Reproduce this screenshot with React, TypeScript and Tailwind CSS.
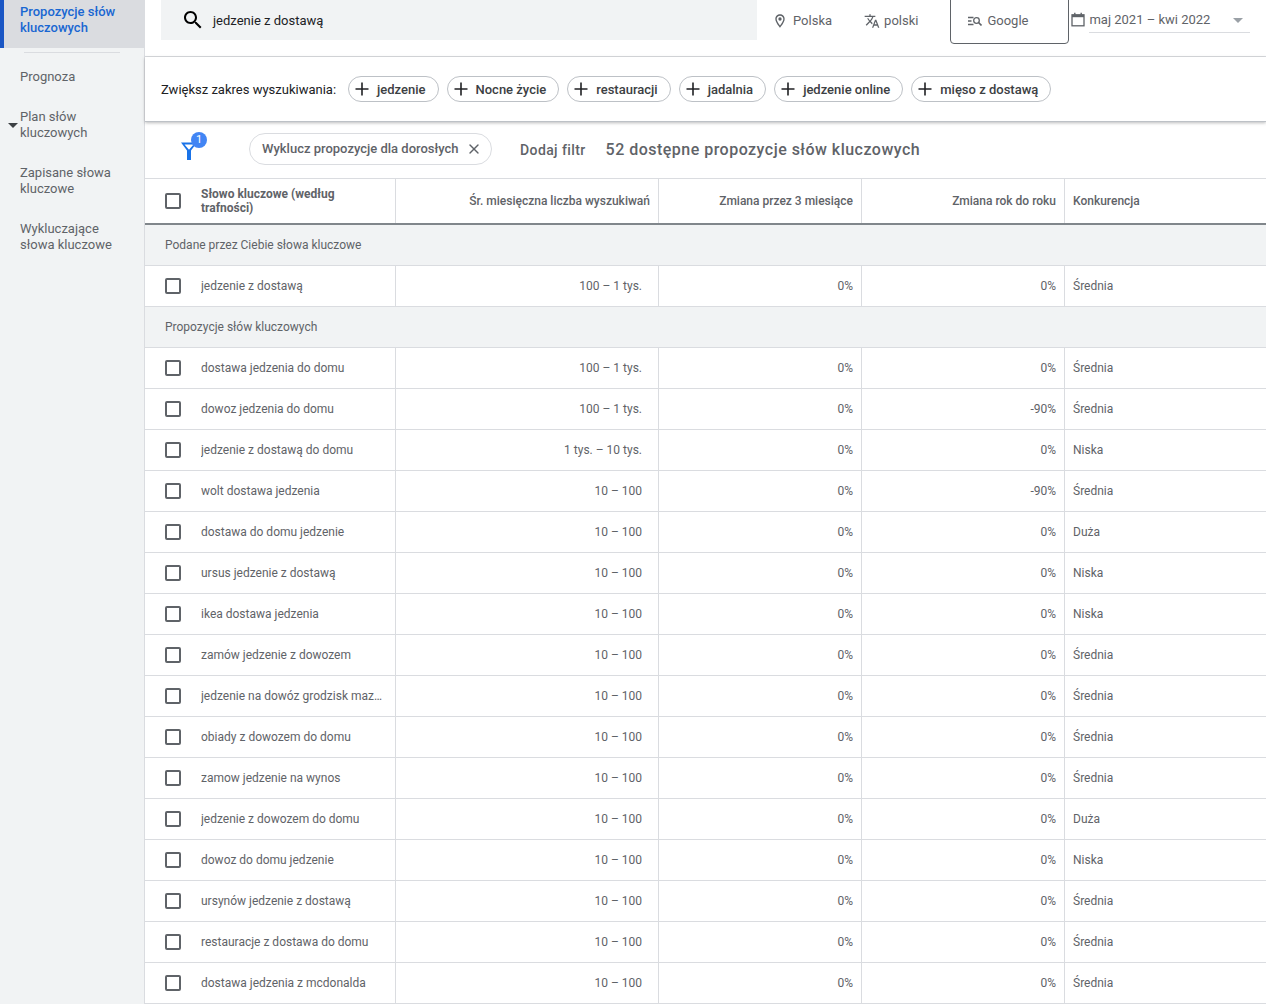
import { X } from 'lucide-react';
import type { ReactNode } from 'react';

type KeywordRow = { name: string; volume: string; yoy: string; competition: string };

const yourKeywords: KeywordRow[] = [{ name: 'jedzenie z dostawą', volume: '100 – 1 tys.', yoy: '0%', competition: 'Średnia' }];

const ideas: KeywordRow[] = [
  { name: 'dostawa jedzenia do domu', volume: '100 – 1 tys.', yoy: '0%', competition: 'Średnia' },
  { name: 'dowoz jedzenia do domu', volume: '100 – 1 tys.', yoy: '-90%', competition: 'Średnia' },
  { name: 'jedzenie z dostawą do domu', volume: '1 tys. – 10 tys.', yoy: '0%', competition: 'Niska' },
  { name: 'wolt dostawa jedzenia', volume: '10 – 100', yoy: '-90%', competition: 'Średnia' },
  { name: 'dostawa do domu jedzenie', volume: '10 – 100', yoy: '0%', competition: 'Duża' },
  { name: 'ursus jedzenie z dostawą', volume: '10 – 100', yoy: '0%', competition: 'Niska' },
  { name: 'ikea dostawa jedzenia', volume: '10 – 100', yoy: '0%', competition: 'Niska' },
  { name: 'zamów jedzenie z dowozem', volume: '10 – 100', yoy: '0%', competition: 'Średnia' },
  { name: 'jedzenie na dowóz grodzisk mazowiecki', volume: '10 – 100', yoy: '0%', competition: 'Średnia' },
  { name: 'obiady z dowozem do domu', volume: '10 – 100', yoy: '0%', competition: 'Średnia' },
  { name: 'zamow jedzenie na wynos', volume: '10 – 100', yoy: '0%', competition: 'Średnia' },
  { name: 'jedzenie z dowozem do domu', volume: '10 – 100', yoy: '0%', competition: 'Duża' },
  { name: 'dowoz do domu jedzenie', volume: '10 – 100', yoy: '0%', competition: 'Niska' },
  { name: 'ursynów jedzenie z dostawą', volume: '10 – 100', yoy: '0%', competition: 'Średnia' },
  { name: 'restauracje z dostawa do domu', volume: '10 – 100', yoy: '0%', competition: 'Średnia' },
  { name: 'dostawa jedzenia z mcdonalda', volume: '10 – 100', yoy: '0%', competition: 'Średnia' },
];

const chips = ['jedzenie', 'Nocne życie', 'restauracji', 'jadalnia', 'jedzenie online', 'mięso z dostawą'];

function Checkbox() {
  return <span className="block h-4 w-4 shrink-0 rounded-[2px] border-2 border-[#5f6368]" />;
}

function PlusIcon() {
  return (
    <svg width="14" height="14" viewBox="0 0 14 14" className="shrink-0">
      <path d="M7 0.5v13M0.5 7h13" stroke="#202124" strokeWidth="1.6" />
    </svg>
  );
}

function SideItem({ children, className = '' }: { children: ReactNode; className?: string }) {
  return <div className={`px-5 text-[13px] leading-4 text-[#5f6368] ${className}`}>{children}</div>;
}

function Row({ row }: { row: KeywordRow }) {
  return (
    <div className="grid h-[41px] grid-cols-[251px_263px_203px_203px_1fr] border-b border-[#dadce0] text-[12px] text-[#5f6368]">
      <div className="flex items-center border-r border-[#dadce0] pl-5">
        <Checkbox />
        <span className="ml-5 w-[181px] truncate">{row.name}</span>
      </div>
      <div className="flex items-center justify-end border-r border-[#dadce0] pr-4">{row.volume}</div>
      <div className="flex items-center justify-end border-r border-[#dadce0] pr-2">0%</div>
      <div className="flex items-center justify-end border-r border-[#dadce0] pr-2">{row.yoy}</div>
      <div className="flex items-center pl-2">{row.competition}</div>
    </div>
  );
}

function GroupRow({ label }: { label: string }) {
  return (
    <div className="flex h-[41px] items-center border-b border-[#dadce0] bg-[#f1f3f4] pl-5 text-[12px] text-[#5f6368]">{label}</div>
  );
}

export default function App() {
  return (
    <div className="flex h-[1004px] w-[1266px] overflow-hidden bg-white font-['Roboto',sans-serif]">
      <aside className="w-[145px] shrink-0 border-r border-[#dadce0] bg-[#f1f3f4]">
        <div className="h-12 border-l-4 border-[#1a56c4] bg-[#dadce0] pl-4 pt-[4px] text-[13px] font-medium leading-4 text-[#1967d2]">
          Propozycje słów
          <br />
          kluczowych
        </div>
        <div className="mx-6 mt-1 h-px bg-[#dadce0]" />
        <SideItem className="mt-4">Prognoza</SideItem>
        <div className="relative mt-[24px]">
          <span className="absolute left-2 top-[14px] h-0 w-0 border-x-[5px] border-t-[5px] border-x-transparent border-t-[#3c4043]" />
          <SideItem>
            Plan słów
            <br />
            kluczowych
          </SideItem>
        </div>
        <SideItem className="mt-6">
          Zapisane słowa
          <br />
          kluczowe
        </SideItem>
        <SideItem className="mt-6">
          Wykluczające
          <br />
          słowa kluczowe
        </SideItem>
      </aside>

      <main className="min-w-0 flex-1">
        <div className="flex h-[57px] border-b border-[#dadce0] text-[13px] text-[#5f6368]">
          <div className="ml-4 flex h-10 w-[596px] items-center bg-[#f1f3f4] pl-[20px] text-[#202124]">
            <svg width="24" height="24" viewBox="0 0 24 24" fill="#000" className="shrink-0">
              <path d="M15.5 14h-.79l-.28-.27C15.41 12.59 16 11.11 16 9.5 16 5.910 13.090 3 9.500 3S3 5.910 3 9.500 5.910 16 9.500 16c1.610 0 3.090-.59 4.230-1.570l.27.28v.79l5 4.990L20.490 19l-4.990-5zm-6 0C7.010 14 5 11.990 5 9.500S7.010 5 9.500 5 14 7.010 14 9.500 11.990 14 9.500 14z" />
            </svg>
            <span className="ml-[8px] mt-px">jedzenie z dostawą</span>
          </div>
          <div className="ml-[15px] flex h-10 items-center gap-[5px] pt-px">
            <svg width="16" height="16" viewBox="0 0 24 24" fill="#5f6368">
              <path d="M12 2C8.130 2 5 5.130 5 9c0 5.250 7 13 7 13s7-7.750 7-13c0-3.870-3.130-7-7-7zM7 9c0-2.760 2.240-5 5-5s5 2.240 5 5c0 2.880-2.880 7.190-5 9.880C9.920 16.210 7 11.850 7 9z" />
              <circle cx="12" cy="9" r="2.500" />
            </svg>
            <span>Polska</span>
          </div>
          <div className="ml-8 flex h-10 items-center gap-[4px] pt-px">
            <svg width="16" height="16" viewBox="0 0 24 24" fill="#5f6368">
              <path d="M12.870 15.070l-2.540-2.510.03-.03c1.740-1.940 2.980-4.170 3.710-6.530H17V4h-7V2H8v2H1v1.990h11.170C11.500 7.920 10.440 9.750 9 11.350 8.070 10.320 7.300 9.190 6.690 8h-2c.73 1.630 1.730 3.170 2.980 4.560l-5.090 5.020L4 19l5-5 3.110 3.110.76-2.040zM18.500 10h-2L12 22h2l1.120-3h4.750L21 22h2l-4.500-12zm-2.620 7l1.620-4.330L19.120 17h-3.240z" />
            </svg>
            <span>polski</span>
          </div>
          <div className="-mt-px ml-8 flex h-[45px] w-[119px] items-center gap-[5px] rounded-b-[4px] border border-[#5f6368] pb-[2px] pl-[17px]">
            <svg width="14" height="10" viewBox="0 0 14 10" fill="none" stroke="#5f6368" strokeWidth="1.300">
              <path d="M0 1.500h5.500M0 5h3.500M0 8.500h5.500" />
              <circle cx="8.500" cy="4.500" r="2.800" />
              <path d="M10.500 6.500l3 3" strokeWidth="1.600" />
            </svg>
            <span>Google</span>
          </div>
          <div className="ml-[2px] flex h-10 items-start pt-[12px]">
            <svg width="14" height="15" viewBox="0 0 14 15" fill="none" stroke="#5f6368">
              <rect x="1" y="2.800" width="12" height="11" strokeWidth="1.300" />
              <path d="M1 4h12" strokeWidth="2.400" />
              <path d="M3.800 0.800v2M10.200 0.800v2" strokeWidth="1.400" />
            </svg>
            <div className="ml-[4px] flex h-[21px] w-[161px] items-start justify-between border-b border-[#dadce0] pr-[7px] leading-[15px]">
              <span>maj 2021 – kwi 2022</span>
              <span className="mt-[6px] h-0 w-0 border-x-[5px] border-t-[5px] border-x-transparent border-t-[#9aa0a6]" />
            </div>
          </div>
        </div>

        <div className="relative z-10 flex h-[65px] items-center border-b border-[#bdc1c6] pl-4 shadow-[0_1px_3px_rgba(60,64,67,0.35)]">
          <span className="mt-px text-[13px] text-[#202124]">Zwiększ zakres wyszukiwania:</span>
          <div className="ml-3 flex gap-2">
            {chips.map((chip) => (
              <div key={chip} className="flex h-[26px] items-center gap-[8px] rounded-full border border-[#bdc1c6] pl-[6px] pr-3 text-[13px] font-medium text-[#3c4043]">
                <PlusIcon />
                <span className="mt-px">{chip}</span>
              </div>
            ))}
          </div>
        </div>

        <div className="flex h-[57px] items-center border-b border-[#dadce0]">
          <div className="relative ml-9 h-5 w-5">
            <svg width="16" height="18" viewBox="0 0 16 18" className="absolute left-0 top-[2px]">
              <path d="M0 0.500h16L10 8.500V18H6V8.500Z M3.500 2.500L8 7.800 12.500 2.500Z" fill="#1a73e8" fillRule="evenodd" />
            </svg>
            <span className="absolute left-[10px] -top-[8px] flex h-4 w-4 items-center justify-center rounded-full bg-[#4285f4] text-[11px] text-white">1</span>
          </div>
          <div className="mb-0.5 ml-[48px] flex h-8 w-[243px] items-center justify-between rounded-full border border-[#dadce0] pl-3 pr-[9px] text-[13px] font-medium text-[#5f6368]">
            <span>Wyklucz propozycje dla dorosłych</span>
            <X size={16} strokeWidth={2} color="#5f6368" />
          </div>
          <span className="ml-7 text-[14px] font-medium tracking-[0.4px] text-[#5f6368]">Dodaj filtr</span>
          <span className="ml-5 text-[16px] font-medium tracking-[0.48px] text-[#5f6368]">52 dostępne propozycje słów kluczowych</span>
        </div>

        <div className="grid h-[46px] grid-cols-[251px_263px_203px_203px_1fr] border-b-2 border-[#80868b] text-[12px] font-medium text-[#5f6368]">
          <div className="flex items-center border-r border-[#dadce0] pl-5">
            <Checkbox />
            <span className="ml-5 w-[160px] font-bold leading-[14px]">Słowo kluczowe (według trafności)</span>
          </div>
          <div className="flex items-center justify-end border-r border-[#dadce0] pr-2">Śr. miesięczna liczba wyszukiwań</div>
          <div className="flex items-center justify-end border-r border-[#dadce0] pr-2">Zmiana przez 3 miesiące</div>
          <div className="flex items-center justify-end border-r border-[#dadce0] pr-2">Zmiana rok do roku</div>
          <div className="flex items-center pl-2">Konkurencja</div>
        </div>

        <GroupRow label="Podane przez Ciebie słowa kluczowe" />
        {yourKeywords.map((row) => (
          <Row key={row.name} row={row} />
        ))}
        <GroupRow label="Propozycje słów kluczowych" />
        {ideas.map((row) => (
          <Row key={row.name} row={row} />
        ))}
      </main>
    </div>
  );
}
